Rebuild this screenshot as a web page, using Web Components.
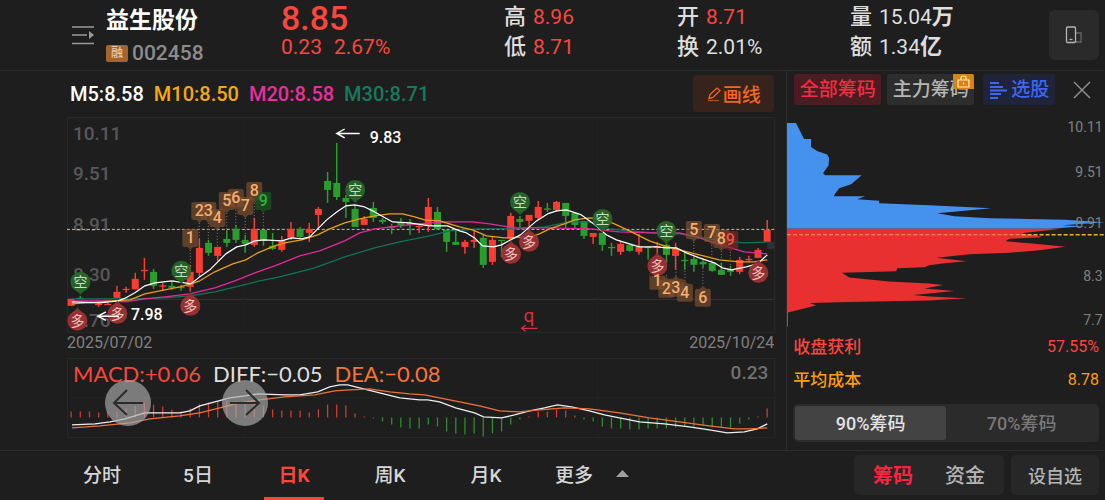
<!DOCTYPE html>
<html lang="zh-CN">
<head>
<meta charset="utf-8">
<meta name="viewport" content="width=device-width, initial-scale=1">
<title>益生股份 002458</title>
<style>
  html { background: #1e1e1e; }
  body { margin: 0; background: #1e1e1e; color: #dedede; font-family: Roboto, "Noto Sans CJK SC", sans-serif; }
</style>
</head>
<body>
<stock-page></stock-page>

<script>
const BASE = `
  :host, * { box-sizing: border-box; }
  button { font: inherit; color: inherit; background: none; border: 0; padding: 0; margin: 0; cursor: pointer; }
  svg { display: block; }
`;
function define(name, html, setup) {
  const t = document.createElement('template');
  t.innerHTML = html;
  customElements.define(name, class extends HTMLElement {
    constructor() {
      super();
      this.attachShadow({ mode: 'open' }).appendChild(t.content.cloneNode(true));
    }
    connectedCallback() { if (setup) setup(this.shadowRoot, this); }
  });
}

/* ---------- header ---------- */
define('quote-stat', `
<style>${BASE}
  :host { display: flex; align-items: center; gap: 7px; height: 30px; font-size: 21px; white-space: nowrap; }
  .k { font-size: 22px; font-weight: 500; }
  :host([up]) .v { color: #f9473e; }
</style>
<span class="k"><slot name="label"></slot></span><span class="v"><slot></slot></span>`);

define('quote-header', `
<style>${BASE}
  :host { display: grid; grid-template-columns: 34px 175fr 223fr 173fr 173fr 199fr 50px; height: 71px;
    padding: 0 6px 0 72px; border-bottom: 1px solid #2b2c2c; line-height: 1; }
  .menu { align-self: center; padding-bottom: 1px; }
  .id { padding-top: 8px; }
  h1 { margin: 0; font-size: 23px; line-height: 25px; font-weight: 700; color: #fff; white-space: nowrap; }
  .code { display: flex; align-items: center; gap: 4px; margin-top: 8px; height: 24px; font-size: 21px; color: #8c8c8c; font-weight: 500; }
  .tag { width: 22px; height: 17px; border-radius: 2px; background: #a5642f; color: #e8cdb4; font-size: 12px; line-height: 17px; text-align: center; }
  .price { color: #f9473e; }
  .last { font-size: 34px; line-height: 36px; font-weight: 500; }
  .chg { display: flex; gap: 12px; font-size: 21px; line-height: 22px; }
  .col { padding-top: 2px; }
  b { font-size: 22px; font-weight: 700; }
  .phone { width: 50px; height: 50px; margin-top: 10px; border-radius: 6px; background: #2a2a2a; display: grid; place-items: center; }
</style>
<button class="menu" aria-label="列表">
  <svg width="22" height="20" viewBox="0 0 22 20" fill="none" stroke="#9a9a9a" stroke-width="1.4"><path d="M0 2h22M0 10h15M0 18.500h22"/><path d="M17 6l5 4-5 4z" fill="#9a9a9a" stroke="none"/></svg>
</button>
<div class="id"><h1>益生股份</h1><div class="code"><span class="tag">融</span><span>002458</span></div></div>
<div class="price"><div class="last">8.85</div><div class="chg"><span>0.23</span><span>2.67%</span></div></div>
<div class="col"><quote-stat up><span slot="label">高</span>8.96</quote-stat><quote-stat up><span slot="label">低</span>8.71</quote-stat></div>
<div class="col"><quote-stat up><span slot="label">开</span>8.71</quote-stat><quote-stat><span slot="label">换</span>2.01%</quote-stat></div>
<div class="col"><quote-stat><span slot="label">量</span>15.04<b>万</b></quote-stat><quote-stat><span slot="label">额</span>1.34<b>亿</b></quote-stat></div>
<button class="phone" aria-label="竖屏">
  <svg width="18" height="18" viewBox="0 0 18 18" fill="none" stroke-width="1.3"><path d="M11 7h5v9h-5" stroke="#656565"/><rect x="1.500" y="1" width="9" height="15.500" rx="1" stroke="#b5b5b5"/><path d="M4.500 13.500h3" stroke="#b5b5b5"/></svg>
</button>`);

/* ---------- K line chart ---------- */
const X = i => 71.2 + 9.167 * i;

/* each entry: colour, high, body top, body bottom, low */
const CANDLES = [
 ['r',299,299,306,306],['g',296,298,299,299],['r',302,302,303,303],['r',303,304,305,307],['r',303,304,305,305],
 ['r',286,292,298,298],['r',287,289,290,293],['r',273,279,289.5,289.5],['r',258,270,271,280],['g',269,272,286,289],
 ['r',283,285.5,286.5,291],['g',282,286,288,290],['g',285,287,288,291],['r',265,272,287,292],['r',239,248,273,277],
 ['g',240,243,253,256],['r',247,247,256,261],['g',230,239,243,247],['g',225,229,240,243],['g',235,240,244,253],
 ['r',218,229,245,247],['g',230,230,241,246],['g',233,246,249,250],['r',236,241,250,252],['r',222,229,238,240],
 ['g',227,229,237,239],['r',223,229,233,242],['r',207,209,215,228],['g',172,181,190,203],['g',143,183,197,200],
 ['g',195,198,202,218],['g',205,209,227,227],['r',216,219,225,225],['g',202,208,218,222],['g',218,220,222,224],
 ['g',224,226.5,227.5,234],['g',218,223,225,228],['g',219,223,225,235],['r',224,226,227,233],['r',198,207,226,232],
 ['g',207,212,229,230],['g',230,230,242,252],['g',230,242,245,245],['r',240,242,247,254],['r',230,240,242,248],
 ['g',235,238,265,268],['r',236,240,262,265],['g',240,240,241,257],['r',213,216,239,239],['g',216,219,222,227],
 ['r',215,215,221,230],['r',201,207,218,220],['g',203,208.5,209.5,212],['r',201,202,210,212],['g',203,203,216,228],
 ['g',213,213,225,228],['g',221,221,236,239],['r',233,233,237,244],['g',233,233,245,251],['g',243,247,248,256],
 ['r',241,244,252,255],['g',245,245,251,252],['r',234,247,252,255],['g',247,247,248,260],['r',242,246,248,258],
 ['g',243,245,255,263],['r',243,249,256,270],['g',252,260,261,270],['g',257,259,265,272],['g',260,262,264.5,268],
 ['g',263,263,271,272],['g',263,270,275,275],['g',266,270,272,276],['r',257,260,272,274],['r',256,259,260,262],
 ['r',248,250,258,258],['r',220,230,242,242]];
const MA = {
 '#10735a': '72,299 130,299 165,298 190,296 215,292 240,286 260,281 280,277 315,268 345,257 375,248 400,242 430,236 450,231 480,229 520,229 545,227 570,222 590,222 610,229 630,231 655,233 680,234 700,237 720,241 745,243 768,242',
 '#e42a9b': '72,301 110,301 125,302 145,299 165,297 190,294 215,288 235,281 255,273 275,266 300,256 320,251 345,241 360,233 375,229 400,226 430,223 447,222 473,222 490,224 515,228 550,228 590,229 620,232 650,233 680,233 700,238 725,246 745,252 768,254',
 '#eba016': '72,304 100,302 130,300 145,294 165,290 180,287 191,284 200,281 215,272 233,264 246,260 258,253 275,246 285,243 302,240 318,235 330,229 345,223 360,219 375,216 390,214 403,214 415,217 425,220 440,221 460,227 473,230 487,236 505,238 530,237 540,234 550,229 565,224 575,220 590,218 603,219 615,224 630,231 650,241 665,246 680,250 700,255 720,260 740,262 755,262 768,260',
 '#ffffff': '72,302 100,303 118,301 126,298 135,293 145,286 155,283 172,281 185,283 191,284 200,277 210,270 226,254 237,247 246,245 255,241 264,240 282,241 292,238 302,239 310,237 318,229 327,220 337,212 346,206 355,205 365,207 375,212 393,222 410,223 430,226 448,226 460,231 467,233 475,238 483,246 494,247 502,245 511,240 521,235 530,227 537,221 548,214 557,211 567,210 573,212 582,215 593,223 607,235 617,240 630,244 640,247 657,247 667,248 677,248 687,253 700,258 715,263 723,268 732,270 747,267 758,264 768,255'
};
/* x, y, text, end of the dotted leader, tint */
const FLAGS_UP = [[190.5,238,'1',265],[199.5,211,'2',240],[208.5,211,'3',242],[217.5,218,'4',247],[227,201,'5',230],[236,198,'6',226],[245.5,206,'7',236],[254.5,191,'8',219],[263.5,201,'9',230,'g'],
 [694.5,230,'5',258],[712.5,233,'7',263],[722,239,'8',265],[731,240,'9',266,'r']];
const FLAGS_DOWN = [[658,281,'1',270],[667,289,'2',275],[676.5,288,'3',260],[685.5,293,'4',265],[703.5,298,'6',268]];
const SHORT = [[80.5,282],[181.5,271],[355.5,190],[520.5,202],[603,219],[667,231]];
const LONG = [[77.5,321],[117.5,314],[190.5,306],[511.5,254],[529.5,242],[658,266],[759,273]];

function kline() {
  let s = '';
  CANDLES.forEach(([c,h,t,b,l], i) => {
    const f = c === 'r' ? '#f93d32' : '#2a9d2f';
    s += `<path d="M${X(i)} ${h}V${l}" stroke="${f}" stroke-width="1.5"/><rect x="${X(i)-3.5}" y="${t}" width="7" height="${Math.max(1.3,b-t)}" fill="${f}"/>`;
  });
  s += '<rect x="768" y="242" width="7" height="7" fill="#2a3436"/>';
  for (const c in MA) s += `<polyline points="${MA[c]}" fill="none" stroke="${c}" stroke-width="1.2" stroke-linejoin="round"/>`;
  SHORT.forEach(([x,y]) => { s += `<path d="M${x-5} ${y+8}l5 5l5 -5z" fill="#265c26"/><circle cx="${x}" cy="${y}" r="10" fill="#28692a" fill-opacity=".9"/><text class="m" x="${x}" y="${y+5}" fill="#c4dfc0">空</text>`; });
  LONG.forEach(([x,y]) => { s += `<path d="M${x-5} ${y-8}l5 -5l5 5z" fill="#8e2f30"/><circle cx="${x}" cy="${y}" r="10" fill="#a13334" fill-opacity=".92"/><text class="m" x="${x}" y="${y+5}" fill="#f0c4c0">多</text>`; });
  const tint = { g: ['#1b5a22','#2fb23a'], r: ['#7c2b2a','#f2503c'] };
  let labels = '';
  FLAGS_UP.forEach(([x,y,n,e,k]) => {
    const [bg, fg] = tint[k] || ['#80512f','#f7ad6c'];
    s += `<path d="M${x} ${y+12}V${e}" stroke="#8c7866" stroke-dasharray="1 2"/><path d="M${x-6} ${y-9}h12q2 0 2 2v14q0 2 -2 2h-3l-3 3l-3 -3h-3q-2 0 -2 -2v-14q0 -2 2 -2z" fill="${bg}" fill-opacity=".66"/>`;
    labels += `<text class="n" x="${x}" y="${y+5}" fill="${fg}">${n}</text>`;
  });
  FLAGS_DOWN.forEach(([x,y,n,e]) => {
    const top = n === '1' ? `M${x-8} ${y-5}h16v12` : `M${x-6} ${y-9}h3l3 -3l3 3h3q2 0 2 2v14`;
    s += `<path d="M${x} ${e}V${y-12}" stroke="#8c7866" stroke-dasharray="1 2"/><path d="${top}q0 2 -2 2h-12q-2 0 -2 -2v-12q0 -4 2 -4z" fill="#80512f" fill-opacity=".66"/>`;
    labels += `<text class="n" x="${x}" y="${y+5}" fill="#f7ad6c">${n}</text>`;
  });
  return s + labels;
}

define('k-line', `
<style>${BASE}
  :host { display: block; }
  svg { width: 100%; height: auto; }
  text { font-family: Roboto, "Noto Sans CJK SC", sans-serif; }
  .a { font-size: 19px; fill: #585858; font-weight: 500; }
  .n { font-size: 16px; font-weight: 500; text-anchor: middle; }
  .m { font-size: 14px; text-anchor: middle; }
  .w { font-size: 16px; font-weight: 500; fill: #fff; }
  .dates { display: flex; justify-content: space-between; height: 21px; line-height: 19px; padding: 0 12px 0 67px; font-size: 16px; color: #808080; }
</style>
<svg viewBox="0 116 787 217" role="img" aria-label="日K线">
  <g fill="none" stroke="#2a2a2a"><path d="M67.500 117.500H775.500V332.500H67.500Z"/><path d="M67 299.500H775" stroke="#363636"/><path d="M244.500 118V332M598.500 118V332" stroke="#222"/></g>
  <text class="a" x="73" y="140">10.11</text><text class="a" x="73" y="180">9.51</text><text class="a" x="73" y="231">8.91</text><text class="a" x="73" y="281">8.30</text><text class="a" x="73" y="327">7.76</text>
  <path d="M67 229.500H775" stroke="#cdb9a8" stroke-dasharray="3 2"/>
  <g id="plot"></g>
  <g fill="none" stroke="#fff" stroke-width="1.4"><path d="M360 133.500H338M345 129l-8 4.500l8 4.500"/><path d="M119 316.500H99M106 312l-8 4.500l8 4"/></g>
  <text class="w" x="370" y="143">9.83</text><text class="w" x="131" y="320">7.98</text>
  <text x="524" y="322" font-size="19" fill="#d8303c">q</text>
  <path d="M538 328.500H523M526 325.500l-4 3l4 3" fill="none" stroke="#d8303c" stroke-width="1.300"/>
</svg>
<div class="dates"><time>2025/07/02</time><time>2025/10/24</time></div>`,
root => { root.getElementById('plot').innerHTML = kline(); });

/* ---------- MACD ---------- */
const BARS = [6,6,6,5,6,6,9,11,15,13,11,8,6,9,13,15,16,17,16,15,14,12,8,7,7,7,5,8,13,13,12,4,1,-1,-4,-7,-10,-11,-11,-7,-9,-14,-16,-17,-16,-19,-16,-14,-7,-2,1,6,6,8,7,2,-2,-4,-9,-11,-11,-12,-12,-11,-11,-11,-10,-9,-9,-8,-10,-10,-10,-6,-2,1,9];
define('macd-chart', `
<style>${BASE}
  :host { display: block; position: relative; }
  svg.plot { width: 100%; height: auto; }
  .labels { position: absolute; inset: 7px 18px auto 73px; display: flex; gap: 12px; font-family: Lato, "Noto Sans CJK SC", sans-serif; font-size: 22px; line-height: 25px; white-space: nowrap; }
  .up { color: #f9473e; } .dea { color: #f97238; }
  .max { margin-left: auto; font-family: Roboto, sans-serif; font-size: 19px; line-height: 23px; color: #717171; font-weight: 500; }
  .nav { position: absolute; top: 26px; width: 46px; height: 46px; border-radius: 50%; background: rgba(172,172,172,.66); display: grid; place-items: center; }
  .prev { left: 105px; } .next { left: 222px; }
</style>
<svg class="plot" viewBox="0 354 787 96" role="img" aria-label="MACD">
  <g fill="none" stroke="#282828"><path d="M67.500 358.500H775.500V437.500H67.500Z"/><path d="M67 397.500H775M244.500 359V437M598.500 359V437" stroke="#242424"/></g>
  <g id="bars"></g>
  <polyline fill="none" stroke="#eee" stroke-width="1.3" points="72,425 95,424 110,422 125,419 135,416 145,413 180,413 190,411 200,406 215,402 230,398 245,396 258,394 285,395 300,395 318,392 330,387 340,385 348,385 360,388 380,393 400,398 420,400 428,400 440,402 456,408 475,413 484,417 502,418 515,415 530,411 545,408 558,405 572,407 590,411 605,415 620,418 640,422 665,424 690,427 710,430 728,433 745,432 758,429 768,424"/>
  <polyline fill="none" stroke="#f0703a" stroke-width="1.3" points="72,428 100,426 130,423 150,419 180,416 200,413 220,408 240,403 260,400 285,397 315,395 335,391 350,390 370,389 390,392 410,394 425,395 440,398 460,402 480,406 500,411 520,412 540,410 565,408 590,409 620,413 650,418 680,422 710,426 735,429 750,429 768,428"/>
</svg>
<div class="labels"><span class="up">MACD:+0.06</span><span>DIFF:−0.05</span><span class="dea">DEA:−0.08</span><span class="max">0.23</span></div>
<button class="nav prev" aria-label="向左"><svg width="32" height="28" viewBox="0 0 32 28" fill="none" stroke="#2b2b2b" stroke-width="2"><path d="M31 14H2M15 1L2 14l13 12"/></svg></button>
<button class="nav next" aria-label="向右"><svg width="32" height="28" viewBox="0 0 32 28" fill="none" stroke="#2b2b2b" stroke-width="2"><path d="M1 14h29M17 1l13 13l-13 12"/></svg></button>`,
root => {
  root.getElementById('bars').innerHTML = BARS.map((v, i) =>
    `<path d="M${X(i)} 417.5V${417.5 - v}" stroke="${v > 0 ? '#cf3a32' : '#2a8f2e'}" stroke-width="1.3"/>`).join('');
});

define('chart-panel', `
<style>${BASE}
  :host { display: block; flex: 787 1 0; min-width: 0; }
  .legend { display: flex; align-items: center; gap: 10px; height: 45px; padding: 0 12px 0 70px; font-size: 20px; font-weight: 500; white-space: nowrap; }
  .draw { margin-left: auto; width: 81px; height: 37px; border-radius: 3px; background: #35231c; color: #f8651f; font-size: 19px; display: flex; align-items: center; justify-content: center; gap: 1px; }
</style>
<div class="legend">
  <span style="color:#fff">M5:8.58</span><span style="color:#f6a90d">M10:8.50</span><span style="color:#e72f9d">M20:8.58</span><span style="color:#167a5c">M30:8.71</span>
  <button class="draw"><svg width="15" height="16" viewBox="0 0 15 16" fill="none" stroke="#f8651f" stroke-width="1.3"><path d="M2 12.500l1-4L10 2l3 2.500L6 11.500z"/><path d="M1 14.500h11" stroke="#a6532e"/></svg>画线</button>
</div>
<k-line></k-line>
<macd-chart></macd-chart>`);

/* ---------- chip distribution ---------- */
define('chip-panel', `
<style>${BASE}
  :host { display: block; flex: 318 1 0; min-width: 0; border-left: 1px solid #2b2c2c; font-weight: 500; }
  .head { display: flex; height: 37px; padding: 3px 14px 0 7px; font-size: 19px; white-space: nowrap; }
  .head button { height: 31px; border-radius: 3px; line-height: 31px; }
  .all { width: 87px; background: #4b1c22; color: #f42c41; }
  .main { position: relative; width: 87px; margin-left: 6px; background: #2d2d2d; color: #b5b5b5; }
  .main svg { position: absolute; right: 0; top: 0; }
  .pick { width: 72px; margin-left: 9px; background: #20243a; color: #3d66f6; display: flex; align-items: center; justify-content: center; gap: 4px; }
  .close { margin-left: auto; display: grid; place-items: center; }
  .plot { width: 100%; height: auto; }
  .plot text { font-family: Roboto, sans-serif; font-size: 14px; fill: #808080; text-anchor: end; font-weight: 400; }
  dl { margin: 0; padding: 0 6px 0 6px; }
  dl div { display: flex; justify-content: space-between; align-items: center; height: 33px; line-height: 1; font-size: 17px; }
  dd { margin: 0; font-size: 16px; font-weight: 400; }
  .profit { color: #f9473e; } .cost { color: #ff9d0a; }
  .seg { display: flex; height: 38px; margin: 7px 6px 0 6px; padding: 2px; border-radius: 5px; background: #2b2b2b; font-size: 18px; }
  .seg button { flex: 1; border-radius: 3px; color: #787878; padding-bottom: 2px; }
  .seg button.on { background: #434343; color: #e2e2e2; }
</style>
<div class="head">
  <button class="all">全部筹码</button>
  <button class="main">主力筹码<svg width="21" height="15" viewBox="0 0 21 15"><path d="M0 0h19q2 0 2 2v13H0z" fill="#d78314"/><path d="M5 6h11v7H5zM8 6V3.500q0-1.500 2.500-1.500T13 3.500V6M10.500 8.500v2" fill="none" stroke="#ffe9c4" stroke-width="1.2"/></svg></button>
  <button class="pick"><svg width="18" height="18" viewBox="0 0 18 18" fill="none" stroke="#3d66f6" stroke-width="2"><path d="M1 2h9M1 6h13M1 9.500h17M1 13h11M1 17h8"/></svg>选股</button>
  <button class="close" aria-label="关闭"><svg width="18" height="18" viewBox="0 0 18 18" stroke="#929292" stroke-width="1.4"><path d="M1 1l16 16M17 1L1 17"/></svg></button>
</div>
<svg class="plot" viewBox="788 108 317 222" role="img" aria-label="筹码分布">
  <path fill="#4592ee" d="M788 123H797L805 139H812V147L818 151L828 154.500L830 158L829.500 165L824 173L826 175H862.500L852 184L840 188L835 195V196H866L858 199L880 200.500V203L930 205L992 208L938 213L955 216L990 218L1065 219.500L1105 222L1063 225L1085 226L1050 228.500H788Z"/>
  <path fill="#e83030" d="M788 228.500H1062L1022 233L1041 236V237L1010 238.500L1006 241L1030 243L1066 246.500L1040 250L1010 252.500L970 254L937 257.500L967 261L945 263L930 265L925 267L898 268L897 271L843 272.500L850 277L890 281L930 283L944 284.500L925 288L955 290.500L914 294.500L930 296L967 297.700L930 300L850 301.500L811 302.500L817 305L805 308L789 312V326H788Z"/>
  <path d="M788 234.500H1022" stroke="#f3a04c" stroke-dasharray="4 2"/><path d="M1022 234.500H1105" stroke="#e6b43a" stroke-width="1.500" stroke-dasharray="4 2"/>
  <text x="1103" y="132">10.11</text><text x="1103" y="177">9.51</text><text x="1103" y="228">8.91</text><text x="1103" y="281">8.3</text><text x="1103" y="325">7.7</text>
</svg>
<dl><div class="profit"><dt>收盘获利</dt><dd>57.55%</dd></div><div class="cost"><dt>平均成本</dt><dd>8.78</dd></div></dl>
<div class="seg"><button class="on">90%筹码</button><button>70%筹码</button></div>`);

/* ---------- bottom bar ---------- */
define('period-tab', `
<style>${BASE}
  :host { display: block; width: 96px; }
  button { position: relative; width: 100%; height: 49px; padding-bottom: 3px; display: flex; align-items: center; justify-content: center; gap: 23px; font-size: 19px; font-weight: 500; color: #d6d6d6; white-space: nowrap; }
  :host([active]) button { color: #f9473e; font-weight: 700; }
  :host([active]) button::after { content: ""; position: absolute; left: 50%; bottom: 0; width: 60px; height: 3px; margin-left: -30px; background: #f9473e; }
</style>
<button><slot></slot></button>`);

define('period-bar', `
<style>${BASE}
  :host { display: flex; height: 50px; padding: 0 6px 0 54px; border-top: 1px solid #2b2c2c; }
  .more { width: 116px; }
  .group, .fav { height: 40px; margin-top: 4px; border-radius: 5px; background: #272727; color: #b4b4b4; font-weight: 500; }
  .group { margin-left: auto; width: 150px; display: flex; padding: 0 3px; font-size: 20px; }
  .group button { flex: 1; }
  .group .on { color: #fb2440; font-weight: 700; }
  .fav { width: 88px; margin-left: 7px; font-size: 18px; }
</style>
<period-tab>分时</period-tab><period-tab>5日</period-tab><period-tab active>日K</period-tab><period-tab>周K</period-tab><period-tab>月K</period-tab>
<period-tab class="more">更多<svg width="13" height="7" viewBox="0 0 13 7" fill="#a0a0a0"><path d="M6.500 0L13 7H0z"/></svg></period-tab>
<div class="group"><button class="on">筹码</button><button>资金</button></div>
<button class="fav">设自选</button>`);

define('stock-page', `
<style>${BASE}
  :host { display: block; }
  main { display: flex; }
</style>
<quote-header></quote-header>
<main><chart-panel></chart-panel><chip-panel></chip-panel></main>
<period-bar></period-bar>`);
</script>
</body>
</html>
